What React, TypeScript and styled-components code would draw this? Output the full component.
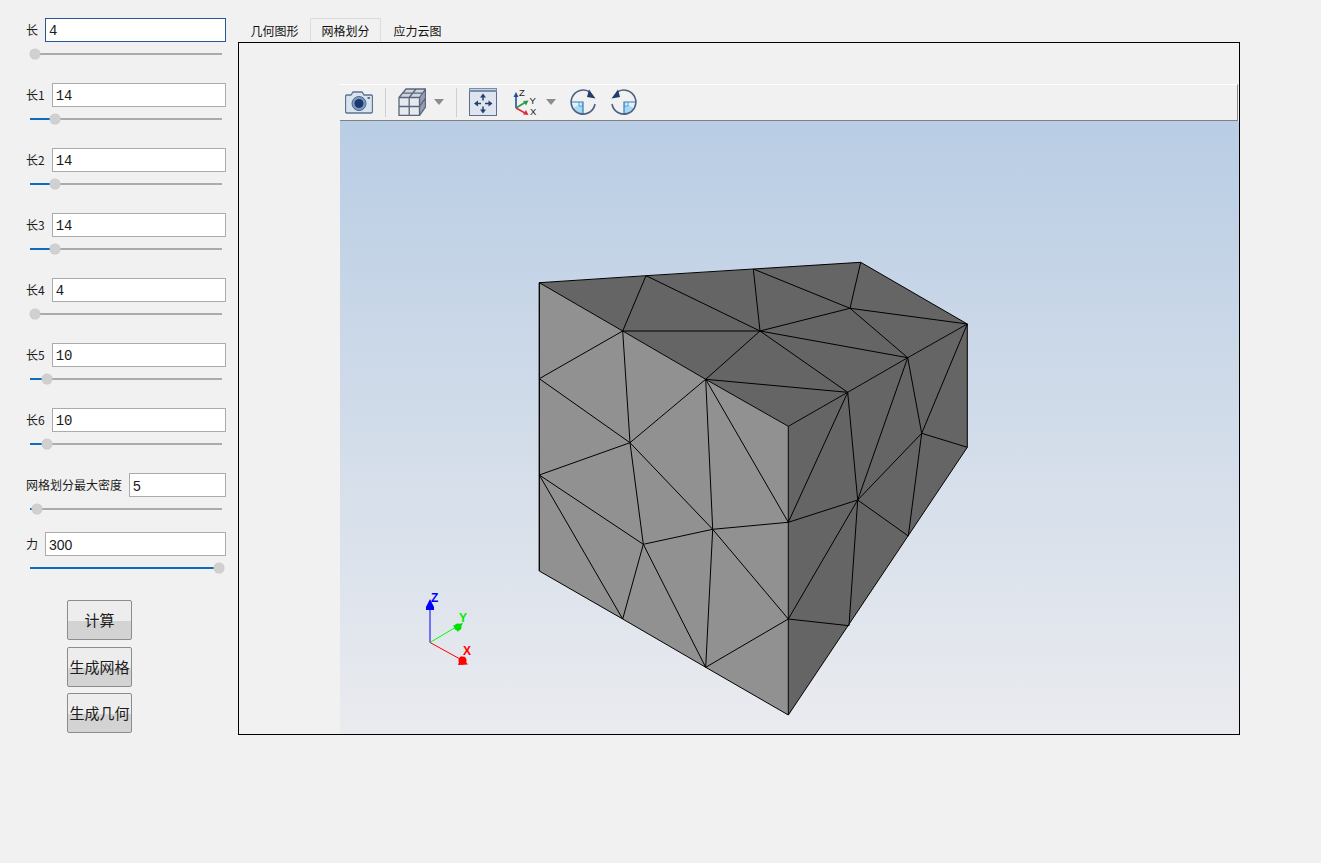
import styled, { createGlobalStyle } from "styled-components";

const GlobalStyle = createGlobalStyle`
  html, body {
    margin: 0;
    padding: 0;
    background: #f1f1f1;
  }
  body {
    font-family: "Liberation Sans", "Noto Sans CJK SC", sans-serif;
  }
`;

const Page = styled.div`
  width: 1321px;
  height: 863px;
  display: flex;
  overflow: hidden;
  background: #f1f1f1;
`;

const Sidebar = styled.div`
  width: 238px;
  flex: none;
  box-sizing: border-box;
  padding: 18px 0 0 26px;
`;

const Field = styled.div<{ $after: number }>`
  width: 200px;
  margin-bottom: ${(p) => p.$after}px;
`;

const FieldRow = styled.div`
  display: flex;
  align-items: center;
  gap: 7px;
  height: 24px;
`;

const Label = styled.span`
  font-family: "Noto Sans CJK SC", sans-serif;
  font-size: 12px;
  line-height: 16px;
  padding-bottom: 1px;
  color: #1c1c1c;
  white-space: nowrap;
`;

const Input = styled.input<{ $mono?: boolean; $focus?: boolean }>`
  flex: 1;
  min-width: 0;
  height: 24px;
  box-sizing: border-box;
  padding: 2px 0 0 3px;
  background: #fff;
  border: 1px solid ${(p) => (p.$focus ? "#2b5797" : "#ababab")};
  outline: none;
  border-radius: 0;
  color: #1a1a1a;
  font-family: ${(p) => (p.$mono ? '"Liberation Mono", monospace' : '"Liberation Sans", sans-serif')};
  font-size: 14px;
`;

const Slider = styled.div`
  position: relative;
  width: 192px;
  height: 10px;
  margin: 7px 0 0 4px;
  display: flex;
  align-items: center;
`;

const Track = styled.div`
  width: 100%;
  height: 2px;
  background: #ababab;
`;

const TrackFill = styled.div`
  position: absolute;
  left: 0;
  top: 4px;
  height: 2px;
  background: #0f6cbd;
`;

const Thumb = styled.div`
  position: absolute;
  top: 0;
  width: 10px;
  height: 10px;
  border-radius: 50%;
  background: #d0d0d0;
  box-shadow: 0 0 0 0.5px #c8c8c8;
`;

const Buttons = styled.div`
  display: flex;
  flex-direction: column;
  align-items: flex-start;
  padding-left: 41px;
`;

const ActionButton = styled.button<{ $after: number }>`
  width: 65px;
  height: 40px;
  flex: none;
  margin: 0 0 ${(p) => p.$after}px;
  padding: 0 0 2px;
  border: 1px solid #8c8c8c;
  border-radius: 2px;
  background: linear-gradient(#ededed 0, #ededed 52%, #d3d3d3 52%, #d3d3d3 100%);
  color: #1c1c1c;
  font-family: "Noto Sans CJK SC", sans-serif;
  font-size: 15px;
  white-space: nowrap;
`;

const Main = styled.div`
  width: 1002px;
  flex: none;
  padding-top: 18px;
`;

const TabBar = styled.div`
  display: flex;
  align-items: stretch;
  height: 24px;
  padding-left: 1px;
`;

const Tab = styled.div<{ $active?: boolean; $inset?: number }>`
  box-sizing: border-box;
  height: 24px;
  width: 71px;
  display: flex;
  align-items: center;
  justify-content: center;
  padding-left: ${(p) => p.$inset ?? 0}px;
  font-family: "Noto Sans CJK SC", sans-serif;
  font-size: 12px;
  color: #111;
  background: #f1f1f1;
  border: 1px solid ${(p) => (p.$active ? "#dcdcdc" : "transparent")};
  border-bottom: none;
`;

const Pane = styled.div`
  box-sizing: border-box;
  width: 1002px;
  height: 693px;
  border: 1px solid #000;
  padding: 41px 0 0 101px;
`;

const Viewer = styled.div`
  width: 899px;
  height: 650px;
  display: flex;
  flex-direction: column;
`;

const Toolbar = styled.div`
  box-sizing: border-box;
  width: 898px;
  height: 37px;
  flex: none;
  display: flex;
  align-items: center;
  padding: 0 0 1px 5px;
  background: #f1f1f1;
  border-top: 1px solid #fff;
  border-right: 1px solid #8a8a8a;
  border-bottom: 1px solid #7f7f7f;
`;

const Separator = styled.div`
  width: 1px;
  height: 29px;
  background: #cfcfcf;
  margin: 0 12px;
`;

const Tool = styled.svg<{ $left?: number }>`
  flex: none;
  display: block;
  margin-left: ${(p) => p.$left ?? 0}px;
`;

const Caret = styled.div<{ $left: number }>`
  width: 0;
  height: 0;
  margin-left: ${(p) => p.$left}px;
  border-left: 5px solid transparent;
  border-right: 5px solid transparent;
  border-top: 6px solid #8c8c8c;
`;

const Canvas = styled.div`
  flex: 1;
  min-height: 0;
  background: linear-gradient(#b9cde4 0%, #eaebef 100%);
`;

const Scene = styled.svg`
  display: block;
  width: 100%;
  height: 100%;
`;

const AxisLabel = styled.text`
  font-family: "Liberation Sans", sans-serif;
  font-size: 12px;
  font-weight: 700;
`;

const IconLetter = styled.text`
  font-family: "Liberation Sans", sans-serif;
  font-size: 9.5px;
  fill: #222;
`;

// mesh nodes in page coordinates, the viewBox of the scene lines them up
const pts: Record<string, [number, number]> = {
  A: [539.3, 282.7], B: [646, 275.7], C: [753.3, 269], D: [860.7, 262.3], E: [967.3, 324],
  F: [850, 308.3], G: [760, 331], H: [622.7, 331], I: [705.7, 379.3], J: [907.7, 357.7],
  K: [847.7, 392.3], L: [788.3, 426.3], M: [539.3, 378.7], N: [630, 442.7], O: [539.3, 475],
  P: [539.3, 571], Q: [643.3, 544.3], R: [712.7, 529.3], S: [788.3, 522.3], T: [622.7, 619],
  U: [705.7, 667.3], V: [788.3, 619], W: [788.3, 715], X: [921.7, 433.3], Y: [967.3, 447.3],
  Z: [857.7, 500], a: [908.3, 536], b: [849, 625.7],
};

const edges = [
  "AB", "BC", "CD", "DE", "AH", "HI", "IL", "LK", "KJ", "JE", "HB", "HG", "BG", "CG", "CF", "DF",
  "FG", "FE", "FJ", "GJ", "GK", "GI", "IK", "AP", "HM", "MN", "HN", "IN", "NO", "OQ", "OT", "QT",
  "NQ", "NR", "IR", "IS", "LS", "QR", "RS", "QU", "RU", "RV", "SV", "VW", "PT", "TU", "UW", "UV",
  "AM", "MO", "OP", "KS", "KZ", "JZ", "JX", "EX", "EY", "XY", "XZ", "Xa", "Za", "ZS", "ZV", "Zb",
  "Vb", "YW",
];

const poly = (names: string) => names.split("").map((n) => pts[n].join(",")).join(" ");

const fields = [
  { label: "长", value: 4, min: 4, max: 96, mono: true, focus: true, after: 24 },
  { label: "长1", value: 14, min: 4, max: 96, mono: true, after: 24 },
  { label: "长2", value: 14, min: 4, max: 96, mono: true, after: 24 },
  { label: "长3", value: 14, min: 4, max: 96, mono: true, after: 24 },
  { label: "长4", value: 4, min: 4, max: 96, mono: true, after: 24 },
  { label: "长5", value: 10, min: 4, max: 96, mono: true, after: 24 },
  { label: "长6", value: 10, min: 4, max: 96, mono: true, after: 24 },
  { label: "网格划分最大密度", value: 5, min: 4, max: 96, after: 18 },
  { label: "力", value: 300, min: 0, max: 300, after: 27 },
];

function CameraIcon() {
  return (
    <Tool width="28" height="24" viewBox="0 0 28 24">
      <path d="M6 5 L8 2 H17 L19 5 H26 Q27.5 5 27.5 7 V21 Q27.5 23 26 23 H2 Q0.5 23 0.5 21 V7 Q0.5 5 2 5 Z" fill="#d9e4f1" stroke="#5d7391" strokeWidth="1.3" />
      <circle cx="14" cy="13.5" r="7" fill="#7f9cc0" stroke="#4d6589" />
      <circle cx="14" cy="13.5" r="4.5" fill="#1d3a6e" />
      <rect x="22.5" y="7" width="2.5" height="2" fill="#5d7391" />
    </Tool>
  );
}

function CubeIcon() {
  return (
    <Tool width="28" height="28" viewBox="0 0 28 28">
      <path d="M1 9.5 L8 1 H27.5 L21.5 9.5 Z" fill="#cfd6e0" />
      <path d="M1 9.5 H21.5 V27.5 H1 Z" fill="#e6eaf0" />
      <path d="M21.5 9.5 L27.5 1 V19 L21.5 27.5 Z" fill="#949eae" />
      <path
        d="M1 9.5 L8 1 H27.5 V19 L21.5 27.5 H1 Z M1 9.5 H21.5 V27.5 M21.5 9.5 L27.5 1 M1 18.5 H21.5 M11.2 9.5 V27.5 M11.2 9.5 L18 1 M4.5 5.2 H24.5 M21.5 18.5 L27.5 10"
        fill="none"
        stroke="#5a6679"
        strokeWidth="1.3"
      />
    </Tool>
  );
}

function FitIcon() {
  return (
    <Tool width="28" height="28" viewBox="0 0 28 28">
      <rect x="0.5" y="0.5" width="27" height="27" fill="#dfe5ee" stroke="#5a6f8f" />
      <rect x="0" y="0" width="28" height="4" fill="#7a8eac" />
      <rect x="1" y="1" width="26" height="1" fill="#c7d2e0" />
      <path d="M14 9 V12.5 M14 18.5 V22 M8.5 15.5 H12 M16 15.5 H20" stroke="#24406e" strokeWidth="1.5" />
      <path d="M14 5.5 L11 9.5 H17 Z M14 25.5 L11 21.5 H17 Z M5 15.5 L9 12.5 V18.5 Z M23.5 15.5 L19.5 12.5 V18.5 Z" fill="#24406e" />
    </Tool>
  );
}

function TriadIcon() {
  return (
    <Tool $left={15} width="26" height="28" viewBox="0 0 26 28">
      <path d="M4 20 V8" stroke="#1f4f9c" strokeWidth="1.6" />
      <path d="M4 4 L1.5 9 H6.5 Z" fill="#1f4f9c" />
      <path d="M4 20 L13 14.5" stroke="#2d9a4b" strokeWidth="1.6" />
      <path d="M16.5 12.5 L11 13 L14 17.5 Z" fill="#2d9a4b" />
      <path d="M4 20 L13 25" stroke="#d9313a" strokeWidth="1.6" />
      <path d="M16.5 27 L11 26.5 L14 22 Z" fill="#d9313a" />
      <IconLetter x="7" y="8">Z</IconLetter>
      <IconLetter x="17.5" y="15.5">Y</IconLetter>
      <IconLetter x="18" y="26.5">X</IconLetter>
    </Tool>
  );
}

function RotateIcon({ flip, left }: { flip?: boolean; left: number }) {
  return (
    <Tool $left={left} width="26" height="26" viewBox="0 0 26 26">
      <g transform={flip ? "translate(26 0) scale(-1 1)" : undefined}>
        <path d="M13 13 H1 A12 12 0 0 0 13 25 Z" fill="#a9d8f3" />
        <path d="M13 13 H1 A12 12 0 0 0 3 19.5 L13 13 Z" fill="#e3f2fb" />
        <path d="M9 13 V17 H13" fill="#d8eefa" stroke="#3f93cb" strokeWidth="0.8" />
        <path d="M1 13 H13 V25" fill="none" stroke="#2f7fbd" strokeWidth="1.2" />
        <path d="M19 2.6 A12 12 0 1 0 25 15" fill="none" stroke="#4a6280" strokeWidth="1.6" />
        <path d="M19 0.5 L17 8 L25.5 9.5 Z" fill="#1f3d6d" />
      </g>
    </Tool>
  );
}

export default function App() {
  return (
    <Page>
      <GlobalStyle />
      <Sidebar>
        {fields.map((f, i) => {
          const pos = ((f.value - f.min) / (f.max - f.min)) * 184;
          return (
            <Field key={i} $after={f.after}>
              <FieldRow>
                <Label>{f.label}</Label>
                <Input $mono={f.mono} $focus={f.focus} defaultValue={f.value} />
              </FieldRow>
              <Slider>
                <Track />
                <TrackFill style={{ width: pos + 2 }} />
                <Thumb style={{ left: pos }} />
              </Slider>
            </Field>
          );
        })}
        <Buttons>
          <ActionButton $after={7}>计算</ActionButton>
          <ActionButton $after={6}>生成网格</ActionButton>
          <ActionButton $after={0}>生成几何</ActionButton>
        </Buttons>
      </Sidebar>
      <Main>
        <TabBar>
          <Tab>几何图形</Tab>
          <Tab $active>网格划分</Tab>
          <Tab $inset={2}>应力云图</Tab>
        </TabBar>
        <Pane>
          <Viewer>
            <Toolbar>
              <CameraIcon />
              <Separator />
              <CubeIcon />
              <Caret $left={8} />
              <Separator />
              <FitIcon />
              <TriadIcon />
              <Caret $left={8} />
              <RotateIcon left={14} />
              <RotateIcon left={15} flip />
            </Toolbar>
            <Canvas>
              <Scene viewBox="340 121 899 613">
                <polygon points={poly("ADEJKLIH")} fill="#656565" />
                <polygon points={poly("LKJEYW")} fill="#656565" />
                <polygon points={poly("AHILWUTP")} fill="#919191" />
                <g stroke="#000" strokeWidth="1" fill="none">
                  {edges.map((e) => (
                    <line key={e} x1={pts[e[0]][0]} y1={pts[e[0]][1]} x2={pts[e[1]][0]} y2={pts[e[1]][1]} />
                  ))}
                </g>
                <line x1="430" y1="642.5" x2="430" y2="606" stroke="#0000ff" />
                <path d="M430 599 L426 607 V610 H434 V607 Z" fill="#0000ff" />
                <line x1="430" y1="642.5" x2="456" y2="627" stroke="#00ff00" />
                <path d="M463 623 L453 625.5 L458 632 Z" fill="#00e000" />
                <line x1="430" y1="642.5" x2="460" y2="659" stroke="#ff0000" />
                <path d="M468 664.5 L458 665 L461 656 Z" fill="#ff0000" />
                <circle cx="462.5" cy="660.5" r="4" fill="#ff0000" />
                <circle cx="458" cy="627" r="3.5" fill="#00e000" />
                <AxisLabel x="431" y="602" fill="#0000ff">Z</AxisLabel>
                <AxisLabel x="459" y="622" fill="#00ee00">Y</AxisLabel>
                <AxisLabel x="463" y="655" fill="#ff0000">X</AxisLabel>
              </Scene>
            </Canvas>
          </Viewer>
        </Pane>
      </Main>
    </Page>
  );
}
